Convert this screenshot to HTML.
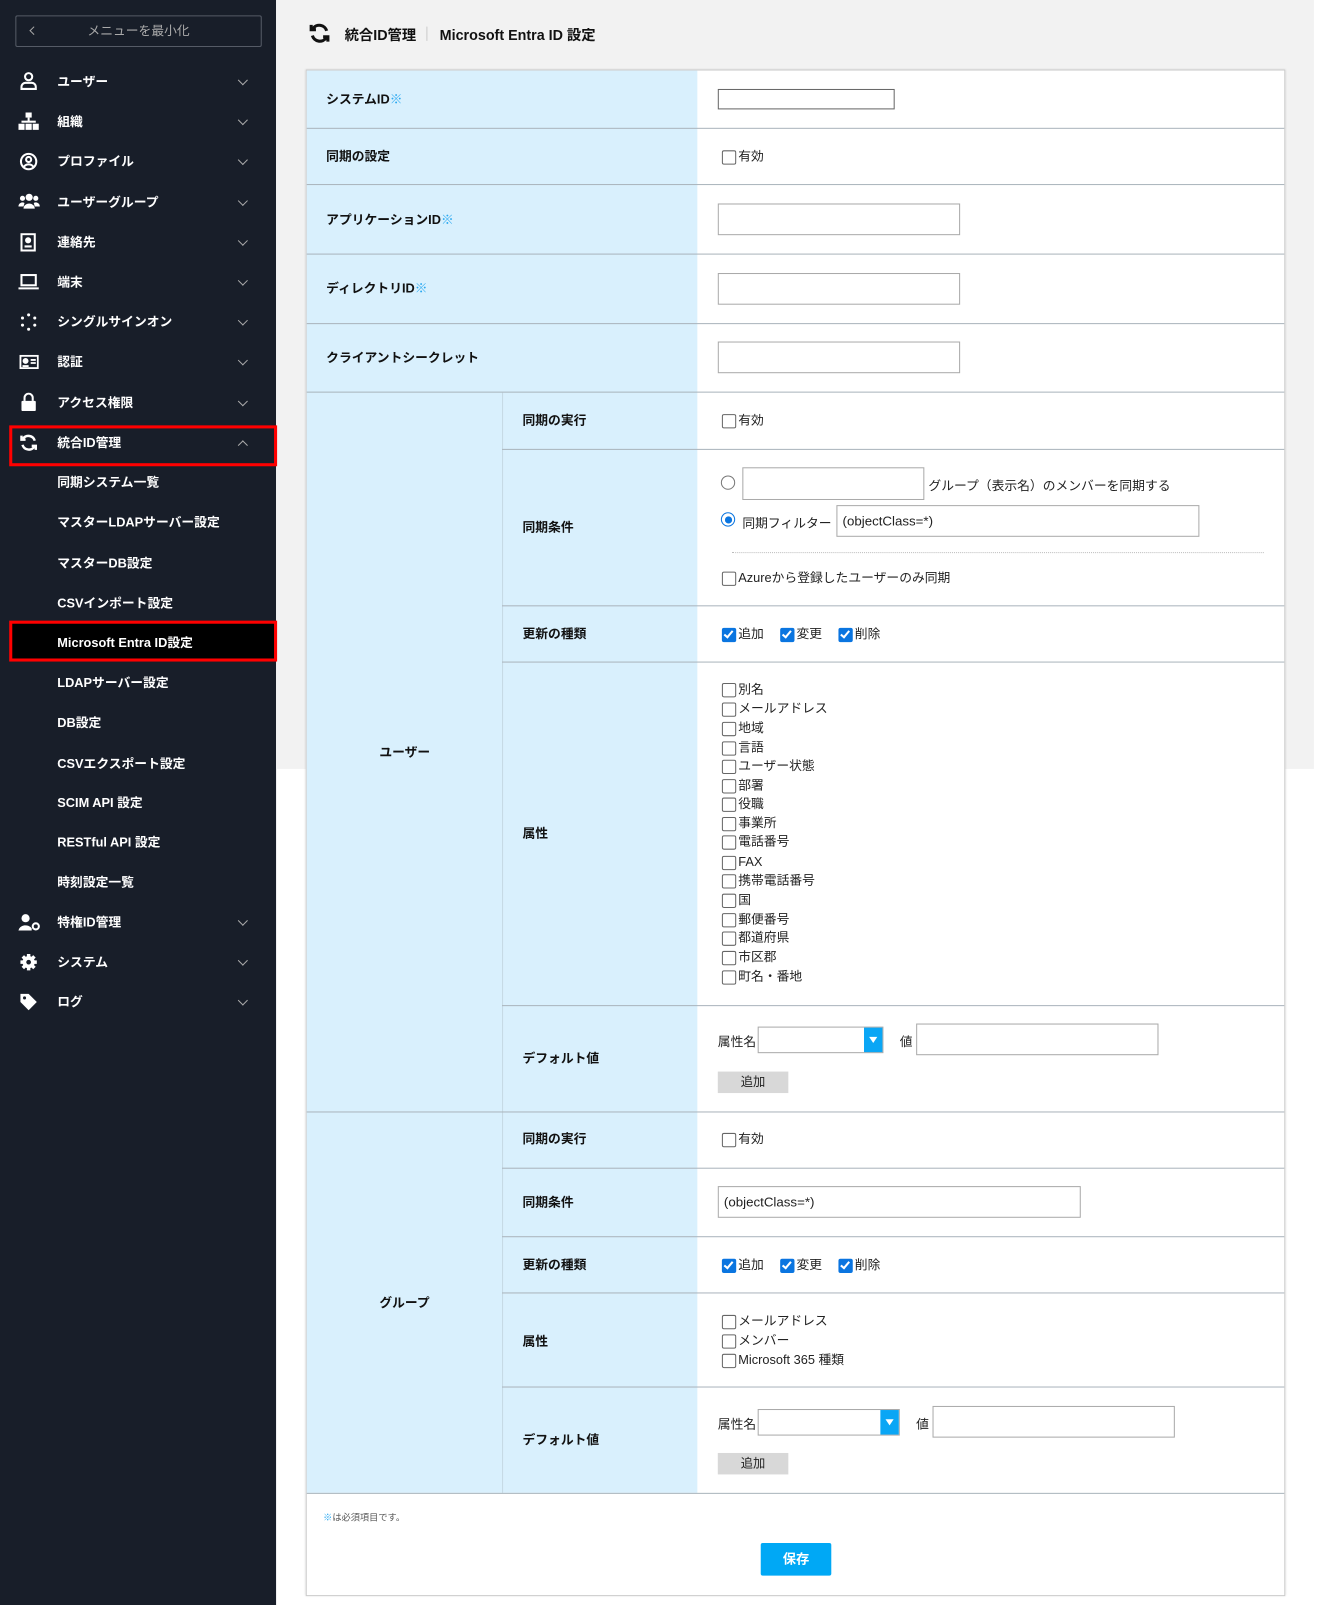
<!DOCTYPE html>
<html><head><meta charset="utf-8">
<style>
*{box-sizing:border-box;margin:0;padding:0}
body{width:1320px;height:1600px;position:relative;background:#fff;font-family:"Liberation Sans","Noto Sans CJK JP",sans-serif;color:#222;overflow:hidden}
#wrap{position:absolute;left:0;top:0;width:1291px;height:1565px;transform:scale(1.0225);transform-origin:0 0}
.a{position:absolute}
#side{left:0;top:0;width:270px;height:1570px;background:#181e29}
#gray{left:270px;top:0;width:1015px;height:752px;background:#f2f2f2}
.mi{position:absolute;left:56px;color:#fff;font-size:12.5px;font-weight:bold;line-height:16px}
.chev{position:absolute;left:234px;width:7px;height:7px;border-right:1.5px solid #aaa;border-bottom:1.5px solid #aaa;transform:rotate(45deg)}
.lb{position:absolute;background:#d9f0fd}
.ln{position:absolute;height:1px;background:#aab4bc}
.t{position:absolute;font-size:12.5px;font-weight:bold;color:#111;line-height:16px}
.cb{position:absolute;font-size:12.5px;line-height:14px;color:#222;padding-left:16px}
.cb::before{content:"";position:absolute;left:0;top:1px;width:12px;height:12px;border:1px solid #666;border-radius:2px;background:#fff}
.cb.on::before{background:#0a75e0;border-color:#0a75e0}
.cb.on::after{content:"";position:absolute;left:4px;top:2px;width:3px;height:7px;border-right:2px solid #fff;border-bottom:2px solid #fff;transform:rotate(40deg)}
.inp{position:absolute;border:1px solid #aaa;background:#fff;font-size:13px;padding-left:5px;color:#222}
.req{color:#29a8f0}
.btn{position:absolute;background:#d8d8d8;font-size:12px;text-align:center;line-height:21px;width:69px;height:21px}
.sel{position:absolute;border:1px solid #aaa;background:#fff;height:26px}
.sel i{position:absolute;right:0;top:0;width:18px;height:24px;background:#0aa6f5}
.sel i::after{content:"";position:absolute;left:5px;top:9px;border-left:4px solid transparent;border-right:4px solid transparent;border-top:6px solid #fff}
</style></head><body>
<div class="a" style="left:0;top:0;width:276px;height:1600px;background:#181e29"></div>
<div id="wrap">
<div id="side" class="a"></div>
<div id="gray" class="a"></div>

<div class="a" style="left:15px;top:15px;width:241px;height:31px;border:1px solid #555b66;border-radius:2px;color:#aaa;font-size:12.5px;line-height:29px;text-align:center">メニューを最小化</div>
<div class="a" style="left:30px;top:27px;width:6px;height:6px;border-left:1.5px solid #aaa;border-bottom:1.5px solid #aaa;transform:rotate(45deg)"></div>

<div class="a" style="left:10px;top:608px;width:260px;height:38px;background:#000"></div>
<div class="a" style="left:9px;top:416px;width:262px;height:40px;border:3px solid #f00"></div>
<div class="a" style="left:9px;top:607px;width:262px;height:40px;border:3px solid #f00"></div>

<svg class="a" style="left:19px;top:70px" width="18" height="18" viewBox="0 0 18 18" fill="none" stroke="#fff" stroke-width="2"><circle cx="9" cy="5" r="3.5"/><path d="M2 17v-2a4 4 0 0 1 4-4h6a4 4 0 0 1 4 4v2z"/></svg>
<svg class="a" style="left:18px;top:110px" width="20" height="18" viewBox="0 0 20 18" fill="#fff"><rect x="7" y="0" width="6" height="5"/><rect x="9" y="5" width="2" height="4"/><rect x="3" y="8" width="14" height="2"/><rect x="0" y="11" width="6" height="6"/><rect x="7" y="11" width="6" height="6"/><rect x="14" y="11" width="6" height="6"/></svg>
<svg class="a" style="left:19px;top:149px" width="18" height="18" viewBox="0 0 18 18" fill="none" stroke="#fff" stroke-width="2"><circle cx="9" cy="9" r="7.5"/><circle cx="9" cy="7" r="2.5"/><path d="M4.5 14a5 4 0 0 1 9 0"/></svg>
<svg class="a" style="left:18px;top:189px" width="21" height="16" viewBox="0 0 21 16" fill="#fff"><circle cx="10.5" cy="4" r="3.5"/><circle cx="4" cy="5" r="2.5"/><circle cx="17" cy="5" r="2.5"/><path d="M5 15a5.5 5 0 0 1 11 0z"/><path d="M0 13a4 4 0 0 1 6-3.5L5 13z"/><path d="M21 13a4 4 0 0 0-6-3.5L16 13z"/></svg>
<svg class="a" style="left:20px;top:228px" width="16" height="18" viewBox="0 0 16 18" fill="none" stroke="#fff" stroke-width="2"><rect x="1" y="1" width="13" height="16"/><circle cx="7.5" cy="7" r="2" fill="#fff"/><path d="M4 13h7"/></svg>
<svg class="a" style="left:18px;top:268px" width="20" height="16" viewBox="0 0 20 16" fill="none" stroke="#fff" stroke-width="2"><rect x="3" y="1" width="14" height="10"/><path d="M0 14h20"/></svg>
<svg class="a" style="left:19px;top:306px" width="18" height="18" viewBox="0 0 18 18" fill="#fff"><circle cx="9" cy="2" r="1.5"/><circle cx="15" cy="5" r="1.5"/><circle cx="15" cy="12" r="1.5"/><circle cx="9" cy="16" r="1.5"/><circle cx="3" cy="12" r="1.5"/><circle cx="3" cy="5" r="1.5"/></svg>
<svg class="a" style="left:19px;top:347px" width="19" height="14" viewBox="0 0 19 14" fill="none" stroke="#fff" stroke-width="1.8"><rect x="1" y="1" width="17" height="12"/><circle cx="6" cy="6" r="2" fill="#fff"/><path d="M3 11h6M11 5h5M11 8h5"/></svg>
<svg class="a" style="left:20px;top:384px" width="16" height="18" viewBox="0 0 16 18" fill="#fff"><path d="M4 8V5a4 4 0 0 1 8 0v3" fill="none" stroke="#fff" stroke-width="2"/><rect x="1" y="8" width="14" height="10" rx="1"/></svg>
<svg class="a" style="left:19px;top:424px" width="18" height="18" viewBox="0 0 18 18" fill="none" stroke="#fff" stroke-width="2.4"><path d="M15 7A6.5 6.5 0 0 0 3.5 5"/><path d="M3 11a6.5 6.5 0 0 0 11.5 2"/><path d="M2 2v4h4"/><path d="M16 16v-4h-4"/></svg>
<svg class="a" style="left:18px;top:893px" width="22" height="18" viewBox="0 0 22 18" fill="#fff"><circle cx="7" cy="5" r="4"/><path d="M0 17a7 6 0 0 1 13-2v2z"/><circle cx="17" cy="13" r="3" fill="none" stroke="#fff" stroke-width="2"/></svg>
<svg class="a" style="left:19px;top:932px" width="18" height="18" viewBox="0 0 18 18"><circle cx="9" cy="9" r="6" fill="#fff"/><g stroke="#fff" stroke-width="3.4"><path d="M9 1v16M1 9h16M3.3 3.3l11.4 11.4M14.7 3.3L3.3 14.7"/></g><circle cx="9" cy="9" r="2.3" fill="#181e29"/></svg>
<svg class="a" style="left:19px;top:971px" width="18" height="18" viewBox="0 0 18 18" fill="#fff"><path d="M1 1h8l8 8-8 8-8-8z"/><circle cx="5" cy="5" r="1.5" fill="#181e29"/></svg>

<div class="mi" style="top:72px">ユーザー</div><div class="chev" style="top:75px"></div>
<div class="mi" style="top:111px">組織</div><div class="chev" style="top:114px"></div>
<div class="mi" style="top:150px">プロファイル</div><div class="chev" style="top:153px"></div>
<div class="mi" style="top:190px">ユーザーグループ</div><div class="chev" style="top:193px"></div>
<div class="mi" style="top:229px">連絡先</div><div class="chev" style="top:232px"></div>
<div class="mi" style="top:268px">端末</div><div class="chev" style="top:271px"></div>
<div class="mi" style="top:307px">シングルサインオン</div><div class="chev" style="top:310px"></div>
<div class="mi" style="top:346px">認証</div><div class="chev" style="top:349px"></div>
<div class="mi" style="top:386px">アクセス権限</div><div class="chev" style="top:389px"></div>
<div class="mi" style="top:425px">統合ID管理</div><div class="chev" style="top:432px;transform:rotate(225deg)"></div>
<div class="mi" style="top:464px">同期システム一覧</div>
<div class="mi" style="top:503px">マスターLDAPサーバー設定</div>
<div class="mi" style="top:543px">マスターDB設定</div>
<div class="mi" style="top:582px">CSVインポート設定</div>
<div class="mi" style="top:621px">Microsoft Entra ID設定</div>
<div class="mi" style="top:660px">LDAPサーバー設定</div>
<div class="mi" style="top:699px">DB設定</div>
<div class="mi" style="top:739px">CSVエクスポート設定</div>
<div class="mi" style="top:777px">SCIM API 設定</div>
<div class="mi" style="top:816px">RESTful API 設定</div>
<div class="mi" style="top:855px">時刻設定一覧</div>
<div class="mi" style="top:894px">特権ID管理</div><div class="chev" style="top:897px"></div>
<div class="mi" style="top:933px">システム</div><div class="chev" style="top:936px"></div>
<div class="mi" style="top:972px">ログ</div><div class="chev" style="top:975px"></div>

<svg class="a" style="left:302px;top:22px" width="21" height="21" viewBox="0 0 18 18" fill="none" stroke="#111" stroke-width="2.6"><path d="M15 7A6.5 6.5 0 0 0 3.5 5"/><path d="M3 11a6.5 6.5 0 0 0 11.5 2"/><path d="M2 2v4h4"/><path d="M16 16v-4h-4"/></svg>
<div class="a" style="left:337px;top:24px;font-size:14px;font-weight:bold;color:#111">統合ID管理</div>
<div class="a" style="left:417px;top:26px;width:1px;height:14px;background:#ccc"></div>
<div class="a" style="left:430px;top:24px;font-size:14px;font-weight:bold;color:#111">Microsoft Entra ID 設定</div>

<div class="a" style="left:299px;top:68px;width:958px;height:1493px;background:#fff;border:1px solid #ccc;box-shadow:0 0 2px rgba(0,0,0,.15)"></div>
<div class="lb" style="left:300px;top:69px;width:382px;height:1391px"></div>
<div class="a" style="left:491px;top:384px;width:1px;height:1076px;background:#c5d9e4"></div>

<div class="ln" style="left:300px;top:125px;width:956px"></div>
<div class="ln" style="left:300px;top:180px;width:956px"></div>
<div class="ln" style="left:300px;top:248px;width:956px"></div>
<div class="ln" style="left:300px;top:316px;width:956px"></div>
<div class="ln" style="left:300px;top:383px;width:956px"></div>
<div class="ln" style="left:491px;top:439px;width:765px"></div>
<div class="ln" style="left:491px;top:592px;width:765px"></div>
<div class="ln" style="left:491px;top:647px;width:765px"></div>
<div class="ln" style="left:491px;top:983px;width:765px"></div>
<div class="ln" style="left:300px;top:1087px;width:956px"></div>
<div class="ln" style="left:491px;top:1142px;width:765px"></div>
<div class="ln" style="left:491px;top:1209px;width:765px"></div>
<div class="ln" style="left:491px;top:1264px;width:765px"></div>
<div class="ln" style="left:491px;top:1356px;width:765px"></div>
<div class="ln" style="left:300px;top:1460px;width:956px"></div>

<div class="t" style="left:319px;top:89px">システムID<span class="req">※</span></div>
<div class="t" style="left:319px;top:145px">同期の設定</div>
<div class="t" style="left:319px;top:207px">アプリケーションID<span class="req">※</span></div>
<div class="t" style="left:319px;top:274px">ディレクトリID<span class="req">※</span></div>
<div class="t" style="left:319px;top:342px">クライアントシークレット</div>
<div class="t" style="left:371px;top:728px">ユーザー</div>
<div class="t" style="left:371px;top:1266px">グループ</div>
<div class="t" style="left:511px;top:403px">同期の実行</div>
<div class="t" style="left:511px;top:508px">同期条件</div>
<div class="t" style="left:511px;top:612px">更新の種類</div>
<div class="t" style="left:511px;top:807px">属性</div>
<div class="t" style="left:511px;top:1027px">デフォルト値</div>
<div class="t" style="left:511px;top:1106px">同期の実行</div>
<div class="t" style="left:511px;top:1168px">同期条件</div>
<div class="t" style="left:511px;top:1229px">更新の種類</div>
<div class="t" style="left:511px;top:1304px">属性</div>
<div class="t" style="left:511px;top:1400px">デフォルト値</div>

<div class="inp" style="left:702px;top:87px;width:173px;height:20px;border-color:#666"></div>
<div class="cb" style="left:706px;top:146px">有効</div>
<div class="inp" style="left:702px;top:199px;width:237px;height:31px"></div>
<div class="inp" style="left:702px;top:267px;width:237px;height:31px"></div>
<div class="inp" style="left:702px;top:334px;width:237px;height:31px"></div>
<div class="cb" style="left:706px;top:404px">有効</div>

<div class="a" style="left:705px;top:465px;width:14px;height:14px;border:1px solid #777;border-radius:50%"></div>
<div class="inp" style="left:726px;top:457px;width:178px;height:32px"></div>
<div class="a" style="left:908px;top:464px;font-size:12.5px">グループ（表示名）のメンバーを同期する</div>
<div class="a" style="left:705px;top:501px;width:14px;height:14px;border:1px solid #0a75e0;border-radius:50%"></div>
<div class="a" style="left:708.5px;top:504.5px;width:7px;height:7px;background:#0a75e0;border-radius:50%"></div>
<div class="a" style="left:726px;top:501px;font-size:12.5px">同期フィルター</div>
<div class="inp" style="left:818px;top:494px;width:355px;height:31px;line-height:29px">(objectClass=*)</div>
<div class="a" style="left:716px;top:540px;width:520px;border-top:1px dotted #bbb"></div>
<div class="cb" style="left:706px;top:558px">Azureから登録したユーザーのみ同期</div>

<div class="cb on" style="left:706px;top:613px">追加</div>
<div class="cb on" style="left:763px;top:613px">変更</div>
<div class="cb on" style="left:820px;top:613px">削除</div>

<div class="cb" style="left:706px;top:667px">別名</div>
<div class="cb" style="left:706px;top:686px">メールアドレス</div>
<div class="cb" style="left:706px;top:705px">地域</div>
<div class="cb" style="left:706px;top:724px">言語</div>
<div class="cb" style="left:706px;top:742px">ユーザー状態</div>
<div class="cb" style="left:706px;top:761px">部署</div>
<div class="cb" style="left:706px;top:779px">役職</div>
<div class="cb" style="left:706px;top:798px">事業所</div>
<div class="cb" style="left:706px;top:816px">電話番号</div>
<div class="cb" style="left:706px;top:836px">FAX</div>
<div class="cb" style="left:706px;top:854px">携帯電話番号</div>
<div class="cb" style="left:706px;top:873px">国</div>
<div class="cb" style="left:706px;top:892px">郵便番号</div>
<div class="cb" style="left:706px;top:910px">都道府県</div>
<div class="cb" style="left:706px;top:929px">市区郡</div>
<div class="cb" style="left:706px;top:948px">町名・番地</div>

<div class="a" style="left:702px;top:1008px;font-size:12.5px">属性名</div>
<div class="sel" style="left:741px;top:1004px;width:123px"><i></i></div>
<div class="a" style="left:880px;top:1008px;font-size:12.5px">値</div>
<div class="inp" style="left:896px;top:1001px;width:237px;height:31px"></div>
<div class="btn" style="left:702px;top:1048px">追加</div>

<div class="cb" style="left:706px;top:1107px">有効</div>
<div class="inp" style="left:702px;top:1160px;width:355px;height:31px;line-height:29px">(objectClass=*)</div>
<div class="cb on" style="left:706px;top:1230px">追加</div>
<div class="cb on" style="left:763px;top:1230px">変更</div>
<div class="cb on" style="left:820px;top:1230px">削除</div>
<div class="cb" style="left:706px;top:1285px">メールアドレス</div>
<div class="cb" style="left:706px;top:1304px">メンバー</div>
<div class="cb" style="left:706px;top:1323px">Microsoft 365 種類</div>

<div class="a" style="left:702px;top:1382px;font-size:12.5px">属性名</div>
<div class="sel" style="left:741px;top:1378px;width:139px"><i></i></div>
<div class="a" style="left:896px;top:1382px;font-size:12.5px">値</div>
<div class="inp" style="left:912px;top:1375px;width:237px;height:31px"></div>
<div class="btn" style="left:702px;top:1421px">追加</div>

<div class="a" style="left:316px;top:1477px;font-size:9px;color:#555"><span class="req">※</span>は必須項目です。</div>
<div class="a" style="left:744px;top:1509px;width:69px;height:32px;background:#00a8f5;border-radius:2px;color:#fff;font-weight:bold;font-size:13px;text-align:center;line-height:32px">保存</div>
</div>
</body></html>
